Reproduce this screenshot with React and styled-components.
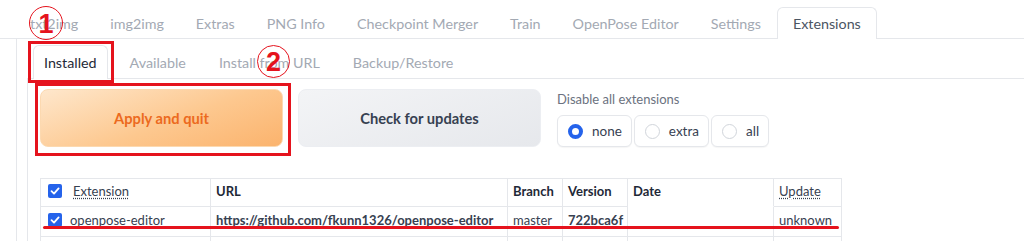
import React from "react";
import styled, { createGlobalStyle, css } from "styled-components";

const Global = createGlobalStyle`
  html, body { margin: 0; padding: 0; background: #ffffff; }
  body { font-family: "Lato", "Noto Sans", sans-serif; color: #374151; overflow: hidden; }
`;

const RED = "#e5131d";

const Root = styled.div`
  position: relative;
  width: 1024px;
  height: 241px;
  overflow: hidden;
`;

const TopTabs = styled.div`
  display: flex;
  padding: 7px 0 0 14px;
  border-bottom: 1px solid #e5e7eb;
`;

const TopTab = styled.div`
  height: 30px;
  display: flex;
  align-items: center;
  padding: 0 15px;
  font-size: 14.3px;
  color: #a3a9b3;
  border: 1px solid transparent;
  border-bottom: none;
  border-radius: 6px 6px 0 0;
  margin-bottom: -1px;
  white-space: nowrap;
  ${(p) =>
    p.$selected &&
    css`
      color: #4b5563;
      background: #fff;
      border-color: #e5e7eb;
      height: 31px;
    `}
`;

const Panel = styled.div`
  margin-left: 16px;
  border-left: 1px solid #e5e7eb;
  padding-left: 10px;
`;

const SubTabs = styled.div`
  display: flex;
  gap: 11px;
  padding: 6px 0 0 6px;
  border-bottom: 1px solid #e5e7eb;
`;

const SubTab = styled.div`
  height: 32px;
  display: flex;
  align-items: center;
  padding: 0 10px;
  font-size: 14.3px;
  color: #a3a9b3;
  border: 1px solid transparent;
  border-bottom: none;
  border-radius: 6px 6px 0 0;
  margin-bottom: -1px;
  white-space: nowrap;
  ${(p) =>
    p.$selected &&
    css`
      color: #1f2937;
      background: #fff;
      border-color: #e5e7eb;
      height: 33px;
    `}
`;

const SubPanel = styled.div`
  border-left: 1px solid #e5e7eb;
  padding: 10px 0 0 12px;
`;

const ActionRow = styled.div`
  display: flex;
  align-items: flex-start;
  gap: 15px;
`;

const BigButton = styled.button`
  width: 243px;
  height: 58px;
  border-radius: 8px;
  font-family: inherit;
  font-size: 14.7px;
  font-weight: 700;
  cursor: pointer;
  ${(p) =>
    p.$primary
      ? css`
          color: #ec6a1e;
          border: 1px solid #fcd9b0;
          background: linear-gradient(160deg, #fee7cc 0%, #fdc88f 55%, #fbb36d 100%);
        `
      : css`
          color: #374151;
          border: 1px solid #eceef2;
          background: linear-gradient(160deg, #f3f4f6 0%, #e6e8ec 100%);
        `}
`;

const RadioBlock = styled.div`
  display: flex;
  flex-direction: column;
  margin-left: 1px;
`;

const RadioLabel = styled.div`
  font-size: 13px;
  color: #6b7280;
  margin-top: 2px;
  height: 24px;
`;

const RadioGroup = styled.div`
  display: flex;
  gap: 2px;
`;

const RadioOption = styled.label`
  height: 30px;
  display: flex;
  align-items: center;
  gap: 9px;
  padding: 0 9px 0 10px;
  border: 1px solid #e5e7eb;
  border-radius: 6px;
  background: #fff;
  box-shadow: 0 1px 1px rgba(0, 0, 0, 0.04);
  font-size: 13.5px;
  color: #374151;
`;

const RadioDot = styled.span`
  width: 15px;
  height: 15px;
  box-sizing: border-box;
  border-radius: 50%;
  ${(p) =>
    p.$checked
      ? css`
          border: 4px solid #2563eb;
          background: #fff;
        `
      : css`
          border: 1px solid #d1d5db;
          background: #fff;
        `}
`;

const Table = styled.table`
  margin-top: 31px;
  border-collapse: separate;
  border-spacing: 0;
  border-top: 1px solid #e5e7eb;
  border-left: 1px solid #e5e7eb;
  font-size: 13px;
  table-layout: fixed;
  width: 801px;
`;

const Cell = styled.td`
  height: 26px;
  padding: 0 5px 3px;
  border-right: 1px solid #e5e7eb;
  border-bottom: ${(p) => (p.$noBottom ? "1px solid transparent" : "1px solid #e5e7eb")};
  white-space: nowrap;
  overflow: hidden;
  color: #374151;
  font-weight: ${(p) => (p.$bold ? 700 : 400)};
  vertical-align: middle;
`;

const HeadCell = styled(Cell).attrs({ as: "th" })`
  height: 24px;
  text-align: left;
  font-weight: 700;
  color: #1f2937;
`;

const CheckCell = styled.div`
  display: flex;
  align-items: center;
  gap: ${(p) => (p.$head ? "11px" : "8px")};
  padding-left: 2px;
`;

const Dotted = styled.abbr`
  text-decoration: underline dotted;
  text-underline-offset: 2px;
  font-weight: 400;
  color: #374151;
`;

const Check = styled.span`
  width: 14px;
  height: 14px;
  border-radius: 2px;
  background: #2563eb;
  display: inline-flex;
  align-items: center;
  justify-content: center;
  flex: none;
`;

const Overlay = styled.div`
  position: absolute;
  pointer-events: none;
`;

const RedBox = styled(Overlay)`
  left: ${(p) => p.$x}px;
  top: ${(p) => p.$y}px;
  width: ${(p) => p.$w}px;
  height: ${(p) => p.$h}px;
  box-sizing: border-box;
  border: 3px solid ${RED};
`;

const RedCircle = styled(Overlay)`
  left: ${(p) => p.$x}px;
  top: ${(p) => p.$y}px;
  width: ${(p) => p.$d}px;
  height: ${(p) => p.$d}px;
  box-sizing: border-box;
  border: 1.5px solid ${RED};
  border-radius: 50%;
  display: flex;
  align-items: center;
  justify-content: center;
  color: ${RED};
  font-family: "Liberation Sans", Arial, sans-serif;
  font-weight: 700;
  font-size: 27px;
  line-height: 1;
  padding-top: 2px;
`;

const RedLine = styled(Overlay)`
  left: 43px;
  top: 226px;
  width: 796px;
  height: 3px;
  border-radius: 2px;
  background: ${RED};
`;

const CheckMark = () => (
  <Check>
    <svg width="10" height="10" viewBox="0 0 10 10">
      <path d="M1.5 5.2 L4 7.6 L8.6 2.4" fill="none" stroke="#fff" strokeWidth="1.8" strokeLinecap="round" strokeLinejoin="round" />
    </svg>
  </Check>
);

const topTabs = ["txt2img", "img2img", "Extras", "PNG Info", "Checkpoint Merger", "Train", "OpenPose Editor", "Settings", "Extensions"];
const subTabs = ["Installed", "Available", "Install from URL", "Backup/Restore"];

const rows = [
  { name: "openpose-editor", url: "https://github.com/fkunn1326/openpose-editor", branch: "master", version: "722bca6f", date: "", update: "unknown" },
  { name: "sd-webui-controlnet", url: "https://github.com/Mikubill/sd-webui-controlnet", branch: "main", version: "e0f2f8f", date: "Sun Jul 23 13:15:05 2023", update: "unknown" },
];

export default function App() {
  return (
    <Root>
      <Global />
      <TopTabs>
        {topTabs.map((t) => (
          <TopTab key={t} $selected={t === "Extensions"}>{t}</TopTab>
        ))}
      </TopTabs>
      <Panel>
        <SubTabs>
          {subTabs.map((t) => (
            <SubTab key={t} $selected={t === "Installed"}>{t}</SubTab>
          ))}
        </SubTabs>
        <SubPanel>
          <ActionRow>
            <BigButton $primary>Apply and quit</BigButton>
            <BigButton>Check for updates</BigButton>
            <RadioBlock>
              <RadioLabel>Disable all extensions</RadioLabel>
              <RadioGroup>
                <RadioOption><RadioDot $checked />none</RadioOption>
                <RadioOption><RadioDot />extra</RadioOption>
                <RadioOption><RadioDot />all</RadioOption>
              </RadioGroup>
            </RadioBlock>
          </ActionRow>
          <Table>
            <colgroup>
              <col style={{ width: 170 }} />
              <col style={{ width: 297 }} />
              <col style={{ width: 55 }} />
              <col style={{ width: 65 }} />
              <col style={{ width: 146 }} />
              <col style={{ width: 68 }} />
            </colgroup>
            <thead>
              <tr>
                <HeadCell>
                  <CheckCell $head><CheckMark /><Dotted title="Use checkbox to enable the extension">Extension</Dotted></CheckCell>
                </HeadCell>
                <HeadCell>URL</HeadCell>
                <HeadCell>Branch</HeadCell>
                <HeadCell>Version</HeadCell>
                <HeadCell $noBottom>Date</HeadCell>
                <HeadCell><Dotted title="Use checkbox to mark the extension for update">Update</Dotted></HeadCell>
              </tr>
            </thead>
            <tbody>
              {rows.map((r) => (
                <tr key={r.name}>
                  <Cell>
                    <CheckCell><CheckMark />{r.name}</CheckCell>
                  </Cell>
                  <Cell $bold>{r.url}</Cell>
                  <Cell>{r.branch}</Cell>
                  <Cell $bold>{r.version}</Cell>
                  <Cell>{r.date}</Cell>
                  <Cell>{r.update}</Cell>
                </tr>
              ))}
            </tbody>
          </Table>
        </SubPanel>
      </Panel>
      <RedBox $x={28} $y={41} $w={86} $h={42} />
      <RedBox $x={35} $y={83} $w={256} $h={73} />
      <RedCircle $x={29} $y={6} $d={34}>1</RedCircle>
      <RedCircle $x={257} $y={45} $d={33}>2</RedCircle>
      <RedLine />
    </Root>
  );
}
